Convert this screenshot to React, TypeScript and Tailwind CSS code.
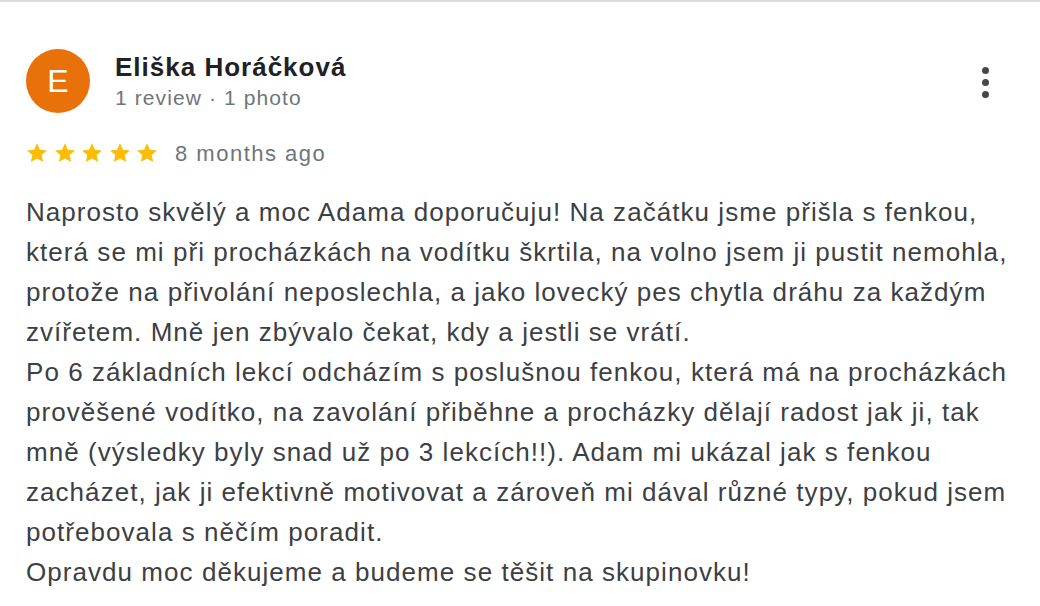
import React from "react"

const reviewLines = [
  "Naprosto skvělý a moc Adama doporučuju! Na začátku jsme přišla s fenkou, která se mi při procházkách na vodítku škrtila, na volno jsem ji pustit nemohla, protože na přivolání neposlechla, a jako lovecký pes chytla dráhu za každým zvířetem. Mně jen zbývalo čekat, kdy a jestli se vrátí.",
  "Po 6 základních lekcí odcházím s poslušnou fenkou, která má na procházkách prověšené vodítko, na zavolání přiběhne a procházky dělají radost jak ji, tak mně (výsledky byly snad už po 3 lekcích!!). Adam mi ukázal jak s fenkou zacházet, jak ji efektivně motivovat a zároveň mi dával různé typy, pokud jsem potřebovala s něčím poradit.",
  "Opravdu moc děkujeme a budeme se těšit na skupinovku!",
]

function Star() {
  return (
    <svg width="24" height="24" viewBox="0 0 24 24" className="shrink-0">
      <path fill="#fbbc04" d="M12 2.2l2.9 6.6 7.1.6-5.4 4.7 1.6 7-6.2-3.7-6.2 3.7 1.6-7L2 9.4l7.1-.6z" />
    </svg>
  )
}

function App() {
  return (
    <div className="w-[1040px] h-[606px] bg-white border-t-2 border-[#dadce0] overflow-hidden font-[family-name:Liberation_Sans,Arial,sans-serif]">
      <div className="pl-[26px] pr-[16px] pt-[47px]">
        {/* --------- header start --------- */}
        <div className="flex items-start">
          <div className="w-[64px] h-[64px] rounded-full bg-[#e8710a] flex items-center justify-center text-white text-[32px] leading-none">
            E
          </div>
          <div className="ml-[25px] flex-1 pt-[2px]">
            <div className="text-[26px] leading-[32px] font-bold tracking-[1px] text-[#202124]">Eliška Horáčková</div>
            <div className="text-[21px] leading-[30px] tracking-[1.1px] text-[#70757a]">1 review · 1 photo</div>
          </div>
          <div className="flex flex-col items-center gap-[5px] pt-[18px] pr-[35px]">
            <span className="w-[7px] h-[7px] rounded-full bg-[#474747]" />
            <span className="w-[7px] h-[7px] rounded-full bg-[#474747]" />
            <span className="w-[7px] h-[7px] rounded-full bg-[#474747]" />
          </div>
        </div>
        {/* --------- header end --------- */}

        <div className="flex items-center mt-[22px] h-[36px]">
          <div className="flex gap-[3.5px] -ml-[1px]">
            <Star />
            <Star />
            <Star />
            <Star />
            <Star />
          </div>
          <span className="ml-[16px] text-[22px] tracking-[1.5px] text-[#70757a]">8 months ago</span>
        </div>

        <div className="mt-[21px] text-[26px] leading-[40px] tracking-[1.05px] text-[#3c4043]">
          {reviewLines.map((line, i) => (
            <p key={i}>{line}</p>
          ))}
        </div>
      </div>
    </div>
  )
}

export default App
